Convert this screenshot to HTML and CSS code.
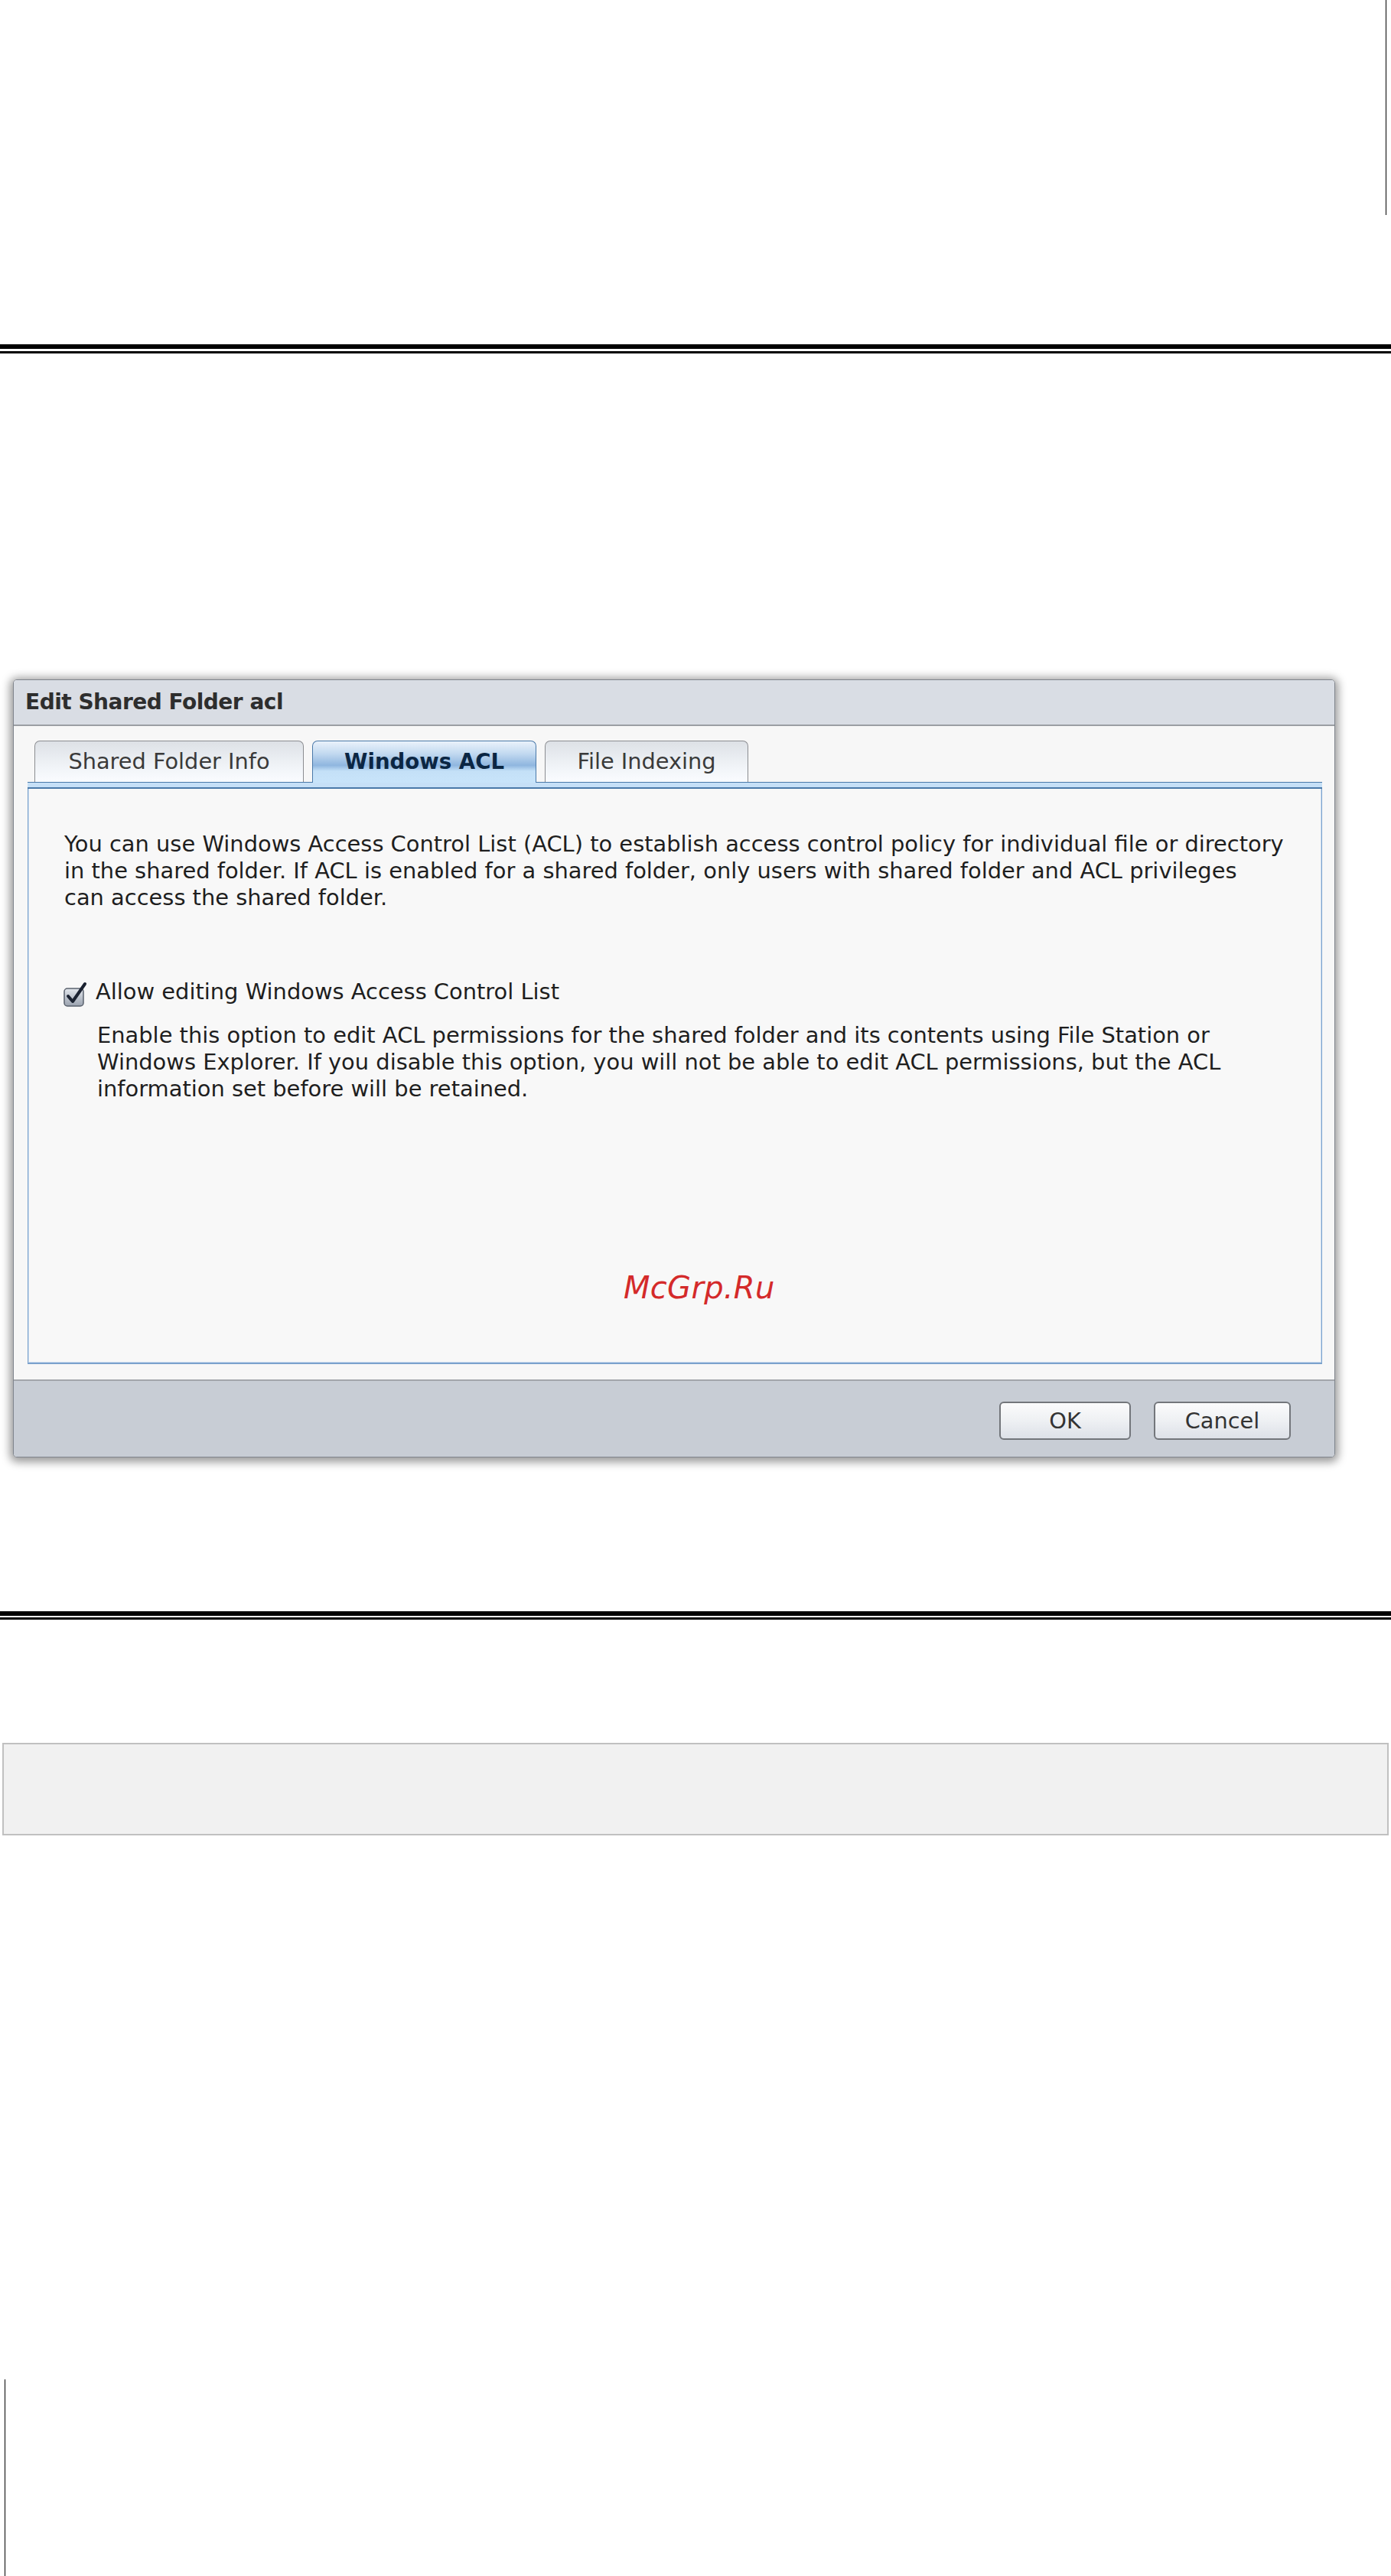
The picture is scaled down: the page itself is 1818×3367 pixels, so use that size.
FILE: index.html
```html
<!DOCTYPE html>
<html lang="en">
<head>
    <meta charset="UTF-8">
    <meta name="viewport" content="width=device-width, initial-scale=1.0">
    <title>Edit Shared Folder acl</title>
    <link rel="stylesheet" href="styles.css">
</head>
<body>
    <div class="top-frame">
        <div class="edge-line"></div>
    </div>
    <div class="double-rule"></div>

    <div class="dialog">
        <div class="dialog-title">Edit Shared Folder acl</div>
        <div class="dialog-body">
            <div class="tabs">
                <div class="tab tab-info">Shared Folder Info</div>
                <div class="tab tab-acl active">Windows ACL</div>
                <div class="tab tab-index">File Indexing</div>
            </div>
            <div class="tab-strip"></div>
            <div class="panel">
                <p class="intro">
                    You can use Windows Access Control List (ACL) to establish access control policy for individual file or directory<br>
                    in the shared folder. If ACL is enabled for a shared folder, only users with shared folder and ACL privileges<br>
                    can access the shared folder.
                </p>
                <label class="check-row">
                    <svg class="checkbox" width="31" height="33" viewBox="0 0 31 33">
                        <defs>
                            <linearGradient id="boxFill" x1="0" y1="0" x2="0" y2="1">
                                <stop offset="0" stop-color="#e3e7ed"/>
                                <stop offset="1" stop-color="#9aa2af"/>
                            </linearGradient>
                        </defs>
                        <rect x="1" y="9" width="25" height="23" rx="4" fill="url(#boxFill)" stroke="#5a616d" stroke-width="1.5"/>
                        <path d="M6 19 L12 26 L28 3" fill="none" stroke="#1b2231" stroke-width="4" stroke-linecap="round" stroke-linejoin="round"/>
                    </svg>
                    <span>Allow editing Windows Access Control List</span>
                </label>
                <p class="hint">
                    Enable this option to edit ACL permissions for the shared folder and its contents using File Station or<br>
                    Windows Explorer. If you disable this option, you will not be able to edit ACL permissions, but the ACL<br>
                    information set before will be retained.
                </p>
            </div>
        </div>
        <div class="dialog-footer">
            <button class="btn btn-ok">OK</button>
            <button class="btn btn-cancel">Cancel</button>
        </div>
    </div>

    <div class="watermark">McGrp.Ru</div>

    <div class="double-rule rule-second"></div>
    <div class="note-box"></div>
    <div class="bottom-line"></div>
</body>
</html>
```

FILE: styles.css
```css
html, body {
    margin: 0;
    padding: 0;
    background-color: #fff;
}
body {
    position: relative;
    width: 1818px;
    height: 3367px;
    overflow: hidden;
    font-family: "DejaVu Sans", Verdana, sans-serif;
}
.top-frame {
    height: 450px;
}
.edge-line {
    width: 1811px;
    height: 281px;
    border-right: 1px solid #000;
}
.double-rule {
    height: 3px;
    border-top: 6px solid #000;
    border-bottom: 3px solid #000;
}
.rule-second {
    margin-top: 201px;
    height: 2px;
}

/* dialog window */
.dialog {
    margin: 426px 0 0 17px;
    width: 1728px;
    box-sizing: border-box;
    border: 1px solid #80858d;
    border-radius: 5px;
    background-color: #f7f7f7;
    box-shadow: 0 2px 12px 4px rgba(0, 0, 0, 0.4);
    overflow: hidden;
}
.dialog-title {
    height: 58px;
    line-height: 58px;
    padding-left: 15px;
    background-color: #d9dde4;
    border-bottom: 2px solid #9b9ea3;
    color: #2e2e2e;
    font-size: 28px;
    font-weight: bold;
    letter-spacing: -0.5px;
}
.dialog-body {
    padding: 19px 16px 21px 18px;
    height: 814px;
}
.tabs {
    display: flex;
    gap: 11px;
    padding-left: 9px;
    height: 54px;
}
.tab {
    box-sizing: border-box;
    height: 54px;
    line-height: 53px;
    border: 1px solid #8b8d91;
    border-bottom: none;
    border-radius: 7px 7px 0 0;
    background: linear-gradient(#dde1e6, #f0f3f7 60%, #fafcff);
    color: #3a3a3a;
    font-size: 28.8px;
    text-align: center;
}
.tab-info { width: 352px; }
.tab-acl { width: 293px; }
.tab-index { width: 266px; }
.tab.active {
    position: relative;
    z-index: 1;
    height: 55px;
    margin-bottom: -1px;
    border-color: #4a79a9;
    background: linear-gradient(#eaf2fb 0%, #c2d9f0 30%, #8fb6df 58%, #c4e0f7 72%, #c8e4fa 100%);
    color: #0b2643;
    font-size: 27.6px;
    font-weight: bold;
}
.tab-strip {
    height: 6px;
    border-top: 1px solid #4a79a9;
    border-bottom: 2px solid #4a79a9;
    background-color: #c6e0f7;
}
.panel {
    box-sizing: border-box;
    height: 752px;
    padding: 55px 0 0 47px;
    border: 1px solid #7ba2cd;
    border-top: none;
    border-bottom-width: 2px;
    background-color: #f8f8f8;
    box-shadow: inset 1px 0 0 #c9dbee, inset -1px 0 0 #c9dbee, inset 0 -1px 0 #c9dbee;
    color: #1e1e1e;
    font-size: 28.9px;
    line-height: 35px;
}
.intro {
    margin: 0;
}
.check-row {
    display: flex;
    align-items: flex-end;
    gap: 11px;
    margin: 88px 0 0 -1px;
}
.checkbox {
    display: block;
    margin-bottom: -2px;
}
.hint {
    margin: 22px 0 0 43px;
}

/* footer with buttons */
.dialog-footer {
    display: flex;
    justify-content: flex-end;
    gap: 30px;
    height: 72px;
    padding: 27px 57px 0 0;
    border-top: 2px solid #a3a6ab;
    background-color: #c8cdd5;
}
.btn {
    box-sizing: border-box;
    height: 50px;
    padding: 0;
    border: 2px solid #73767b;
    border-radius: 6px;
    background: linear-gradient(#fbfbfc, #eef0f3 50%, #dde1e8);
    color: #333;
    font-family: "DejaVu Sans", Verdana, sans-serif;
    font-size: 28.8px;
}
.btn-ok { width: 172px; }
.btn-cancel { width: 179px; }

.watermark {
    position: absolute;
    left: 815px;
    top: 1663px;
    line-height: 40px;
    color: #d42a2a;
    font-size: 40px;
    font-style: italic;
    letter-spacing: 0.3px;
}

.note-box {
    margin: 161px 0 0 3px;
    width: 1812px;
    height: 121px;
    box-sizing: border-box;
    border: 2px solid #c0c0c0;
    background-color: #f1f1f1;
}
.bottom-line {
    margin: 711px 0 0 6px;
    width: 1px;
    height: 257px;
    background-color: #000;
}
```
